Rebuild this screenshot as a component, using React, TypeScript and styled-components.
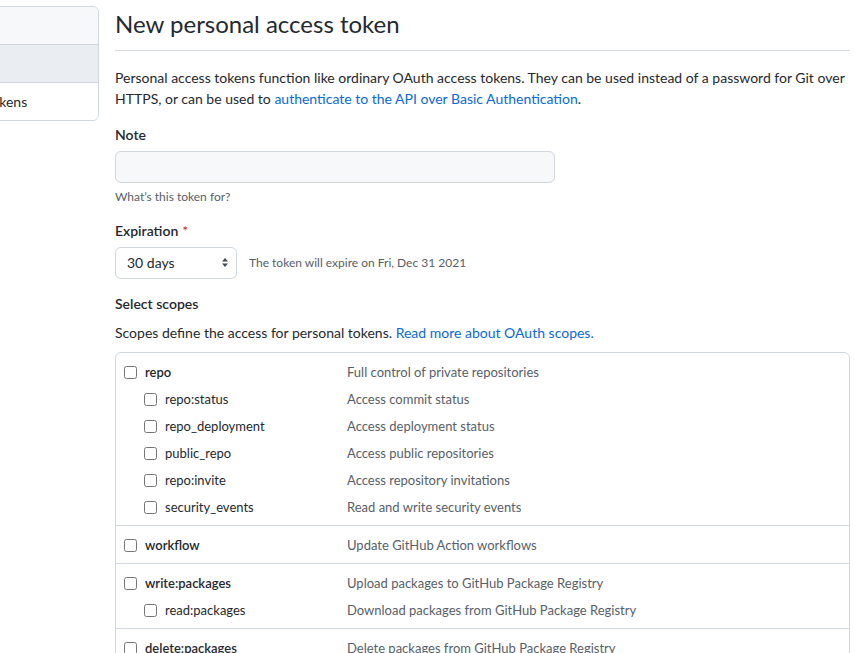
import React from "react";
import styled, { createGlobalStyle } from "styled-components";

const GlobalStyle = createGlobalStyle`
  html, body {
    margin: 0;
    padding: 0;
    background: #ffffff;
    overflow: hidden;
  }
  body {
    font-family: "Segoe UI", Lato, "Liberation Sans", Arial, sans-serif;
    font-size: 14px;
    line-height: 1.5;
    color: #24292f;
  }
`;

const Layout = styled.div`
  display: flex;
  align-items: flex-start;
  gap: 16px;
  margin-left: -130px;
  padding-top: 6px;
`;

const SideNav = styled.nav`
  width: 229px;
  flex-shrink: 0;
  box-sizing: border-box;
  border: 1px solid #d0d7de;
  border-radius: 6px;
  overflow: hidden;
`;

const NavItem = styled.div<{ $tone?: "hover" | "active" }>`
  padding: 8px 16px;
  line-height: 21px;
  white-space: nowrap;
  background: ${(p) =>
    p.$tone === "hover" ? "#f6f8fa" : p.$tone === "active" ? "#eaeef2" : "#ffffff"};
  & + & {
    border-top: 1px solid #d0d7de;
  }
`;

const Main = styled.main`
  width: 735px;
  flex-shrink: 0;
`;

const Subhead = styled.div`
  border-bottom: 1px solid #d8dee4;
  padding-bottom: 8px;
  margin-bottom: 16px;
`;

const Title = styled.h2`
  margin: 0;
  font-size: 24px;
  font-weight: 400;
  line-height: 36px;
`;

const Text = styled.p<{ $gap?: number }>`
  margin: 0 0 ${(p) => p.$gap ?? 16}px;
  line-height: 21px;
`;

const Link = styled.a`
  color: #0969da;
  text-decoration: none;
`;

const FormGroup = styled.div`
  margin-bottom: 15px;
`;

const Label = styled.label<{ $gap?: number }>`
  display: block;
  font-weight: 600;
  line-height: 21px;
  margin-top: -1px;
  margin-bottom: ${(p) => p.$gap ?? 6}px;
`;

const Required = styled.span`
  color: #cf222e;
  margin-left: 4px;
  font-weight: 400;
`;

const TextInput = styled.input`
  display: block;
  width: 440px;
  height: 32px;
  box-sizing: border-box;
  padding: 5px 12px;
  background: #f6f8fa;
  border: 1px solid #d0d7de;
  border-radius: 6px;
  font: inherit;
  outline: none;
`;

const Note = styled.p`
  margin: 5px 0 0;
  font-size: 12px;
  line-height: 18px;
  color: #57606a;
`;

const InlineRow = styled.div`
  display: flex;
  align-items: center;
  gap: 12px;
`;

const Select = styled.div`
  width: 122px;
  height: 32px;
  box-sizing: border-box;
  display: flex;
  align-items: center;
  justify-content: space-between;
  padding: 0 8px 1px 11px;
  border: 1px solid #d0d7de;
  border-radius: 6px;
  background: #ffffff;
`;

const InlineNote = styled.span`
  font-size: 12px;
  color: #57606a;
`;

const ScopeTable = styled.div`
  border: 1px solid #d0d7de;
  border-radius: 6px;
  font-size: 13px;
`;

const ScopeGroup = styled.div`
  padding: 9px 8px 7px;
  display: flex;
  flex-direction: column;
  gap: 6px;
  & + & {
    border-top: 1px solid #d0d7de;
  }
`;

const ScopeRow = styled.div`
  display: grid;
  grid-template-columns: 223px 1fr;
  align-items: center;
  line-height: 21px;
`;

const ScopeName = styled.label<{ $child?: boolean }>`
  display: flex;
  align-items: center;
  gap: 8px;
  padding-left: ${(p) => (p.$child ? 20 : 0)}px;
  font-weight: ${(p) => (p.$child ? 400 : 600)};
  white-space: nowrap;
`;

const Check = styled.input`
  margin: 0;
  width: 13px;
  height: 13px;
`;

const ScopeDesc = styled.span`
  color: #57606a;
  white-space: nowrap;
`;

type Scope = { name: string; desc: string; children?: Scope[] };

const scopes: Scope[] = [
  {
    name: "repo",
    desc: "Full control of private repositories",
    children: [
      { name: "repo:status", desc: "Access commit status" },
      { name: "repo_deployment", desc: "Access deployment status" },
      { name: "public_repo", desc: "Access public repositories" },
      { name: "repo:invite", desc: "Access repository invitations" },
      { name: "security_events", desc: "Read and write security events" },
    ],
  },
  { name: "workflow", desc: "Update GitHub Action workflows" },
  {
    name: "write:packages",
    desc: "Upload packages to GitHub Package Registry",
    children: [{ name: "read:packages", desc: "Download packages from GitHub Package Registry" }],
  },
  { name: "delete:packages", desc: "Delete packages from GitHub Package Registry" },
  {
    name: "admin:org",
    desc: "Full control of orgs and teams, read and write org projects",
    children: [
      { name: "write:org", desc: "Read and write org and team membership, read and write org projects" },
      { name: "read:org", desc: "Read org and team membership, read org projects" },
    ],
  },
];

function SelectArrows() {
  return (
    <svg width="6" height="9" viewBox="0 0 6 9" fill="#424a53">
      <polygon points="0,3.5 3,0 6,3.5" />
      <polygon points="0,5.5 3,9 6,5.5" />
    </svg>
  );
}

function ScopeLine({ scope, child }: { scope: Scope; child?: boolean }) {
  return (
    <ScopeRow>
      <ScopeName $child={child}>
        <Check type="checkbox" />
        {scope.name}
      </ScopeName>
      <ScopeDesc>{scope.desc}</ScopeDesc>
    </ScopeRow>
  );
}

export default function App() {
  return (
    <>
      <GlobalStyle />
      <Layout>
        <SideNav>
          <NavItem $tone="hover">GitHub Apps</NavItem>
          <NavItem $tone="active">OAuth Apps</NavItem>
          <NavItem>Personal access tokens</NavItem>
        </SideNav>

        <Main>
          <Subhead>
            <Title>New personal access token</Title>
          </Subhead>

          <Text>
            Personal access tokens function like ordinary OAuth access tokens. They can be used
            instead of a password for Git over HTTPS, or can be used to{" "}
            <Link href="#">authenticate to the API over Basic Authentication</Link>.
          </Text>

          <FormGroup>
            <Label>Note</Label>
            <TextInput type="text" />
            <Note>What’s this token for?</Note>
          </FormGroup>

          <FormGroup>
            <Label>
              Expiration<Required>*</Required>
            </Label>
            <InlineRow>
              <Select>
                <span>30 days</span>
                <SelectArrows />
              </Select>
              <InlineNote>The token will expire on Fri, Dec 31 2021</InlineNote>
            </InlineRow>
          </FormGroup>

          <FormGroup>
            <Label $gap={8}>Select scopes</Label>
            <Text $gap={9}>
              Scopes define the access for personal tokens.{" "}
              <Link href="#">Read more about OAuth scopes.</Link>
            </Text>
            <ScopeTable>
              {scopes.map((s) => (
                <ScopeGroup key={s.name}>
                  <ScopeLine scope={s} />
                  {s.children?.map((c) => (
                    <ScopeLine key={c.name} scope={c} child />
                  ))}
                </ScopeGroup>
              ))}
            </ScopeTable>
          </FormGroup>
        </Main>
      </Layout>
    </>
  );
}
